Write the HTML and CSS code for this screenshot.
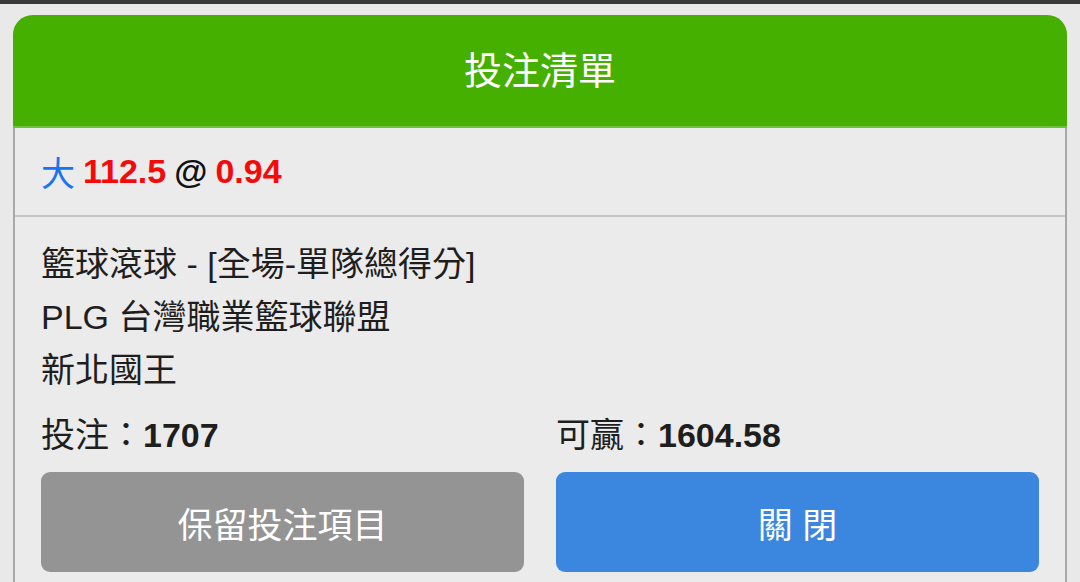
FILE: index.html
```html
<!DOCTYPE html>
<html lang="zh-Hant">
  <head>
    <meta charset="UTF-8" />
    <meta name="viewport" content="width=device-width, initial-scale=1.0" />
    <title>投注清單</title>
    <link rel="stylesheet" href="styles.css">
  </head>
  <body>
    <div class="topbar"></div>
    <div class="card">
      <header class="card-head">投注清單</header>
      <div class="pick">
        <span class="side">大</span>
        <span class="red">112.5</span>
        <span class="at">@</span>
        <span class="red">0.94</span>
      </div>
      <div class="detail">
        <p>籃球滾球 - [全場-單隊總得分]</p>
        <p>PLG 台灣職業籃球聯盟</p>
        <p>新北國王</p>
        <div class="sums">
          <div>投注：<strong>1707</strong></div>
          <div>可贏：<strong>1604.58</strong></div>
        </div>
        <div class="actions">
          <button class="btn btn-keep">保留投注項目</button>
          <button class="btn btn-close">關 閉</button>
        </div>
      </div>
    </div>
  </body>
</html>
```

FILE: styles.css
```css
:root {
  --green: #45b000;
  --bg: #e9e9e9;
  --card-bg: #ebebeb;
  --text: #1e1e1e;
  --font: "Liberation Sans", "Noto Sans CJK TC", sans-serif;
}
* {
  margin: 0;
  padding: 0;
  box-sizing: border-box;
}
body {
  background-color: var(--bg);
  font-family: var(--font);
  color: var(--text);
  overflow: hidden;
}
.topbar {
  height: 4px;
  background-color: #3a3a3a;
}
.card {
  margin: 11px 13px 0 13px;
  width: 1054px;
  background-color: var(--card-bg);
  border: 2px solid #a9a9a9;
  border-top: none;
  border-radius: 20px 20px 0 0;
  height: 600px;
}
.card-head {
  background-color: var(--green);
  color: #fff;
  height: 113px;
  margin: 0 -2px;
  border-radius: 20px 20px 0 0;
  border-bottom: 2px solid #6cc23a;
  font-size: 38px;
  display: flex;
  align-items: center;
  justify-content: center;
  padding-bottom: 7px;
}
.pick {
  height: 89px;
  padding: 0 26px;
  display: flex;
  align-items: center;
  gap: 8px;
  font-size: 34px;
  font-weight: bold;
  border-bottom: 2px solid #c6c6c6;
}
.side {
  color: #1a73f0;
  font-weight: normal;
}
.red {
  color: #f50a0a;
}
.at {
  color: #111;
}
.detail {
  padding: 21px 26px 0 26px;
  font-size: 34px;
}
.detail p {
  line-height: 53px;
}
.sums {
  display: grid;
  grid-template-columns: 1fr 1fr;
  gap: 32px;
  line-height: 53px;
  margin-top: 12px;
}
.sums strong {
  font-weight: bold;
}
.actions {
  display: grid;
  grid-template-columns: 1fr 1fr;
  gap: 32px;
  margin-top: 10px;
}
.btn {
  height: 100px;
  border: none;
  border-radius: 9px;
  color: #fff;
  font-family: var(--font);
  font-size: 35px;
}
.btn-keep {
  background-color: #949494;
}
.btn-close {
  background-color: #3b87e0;
}
```
